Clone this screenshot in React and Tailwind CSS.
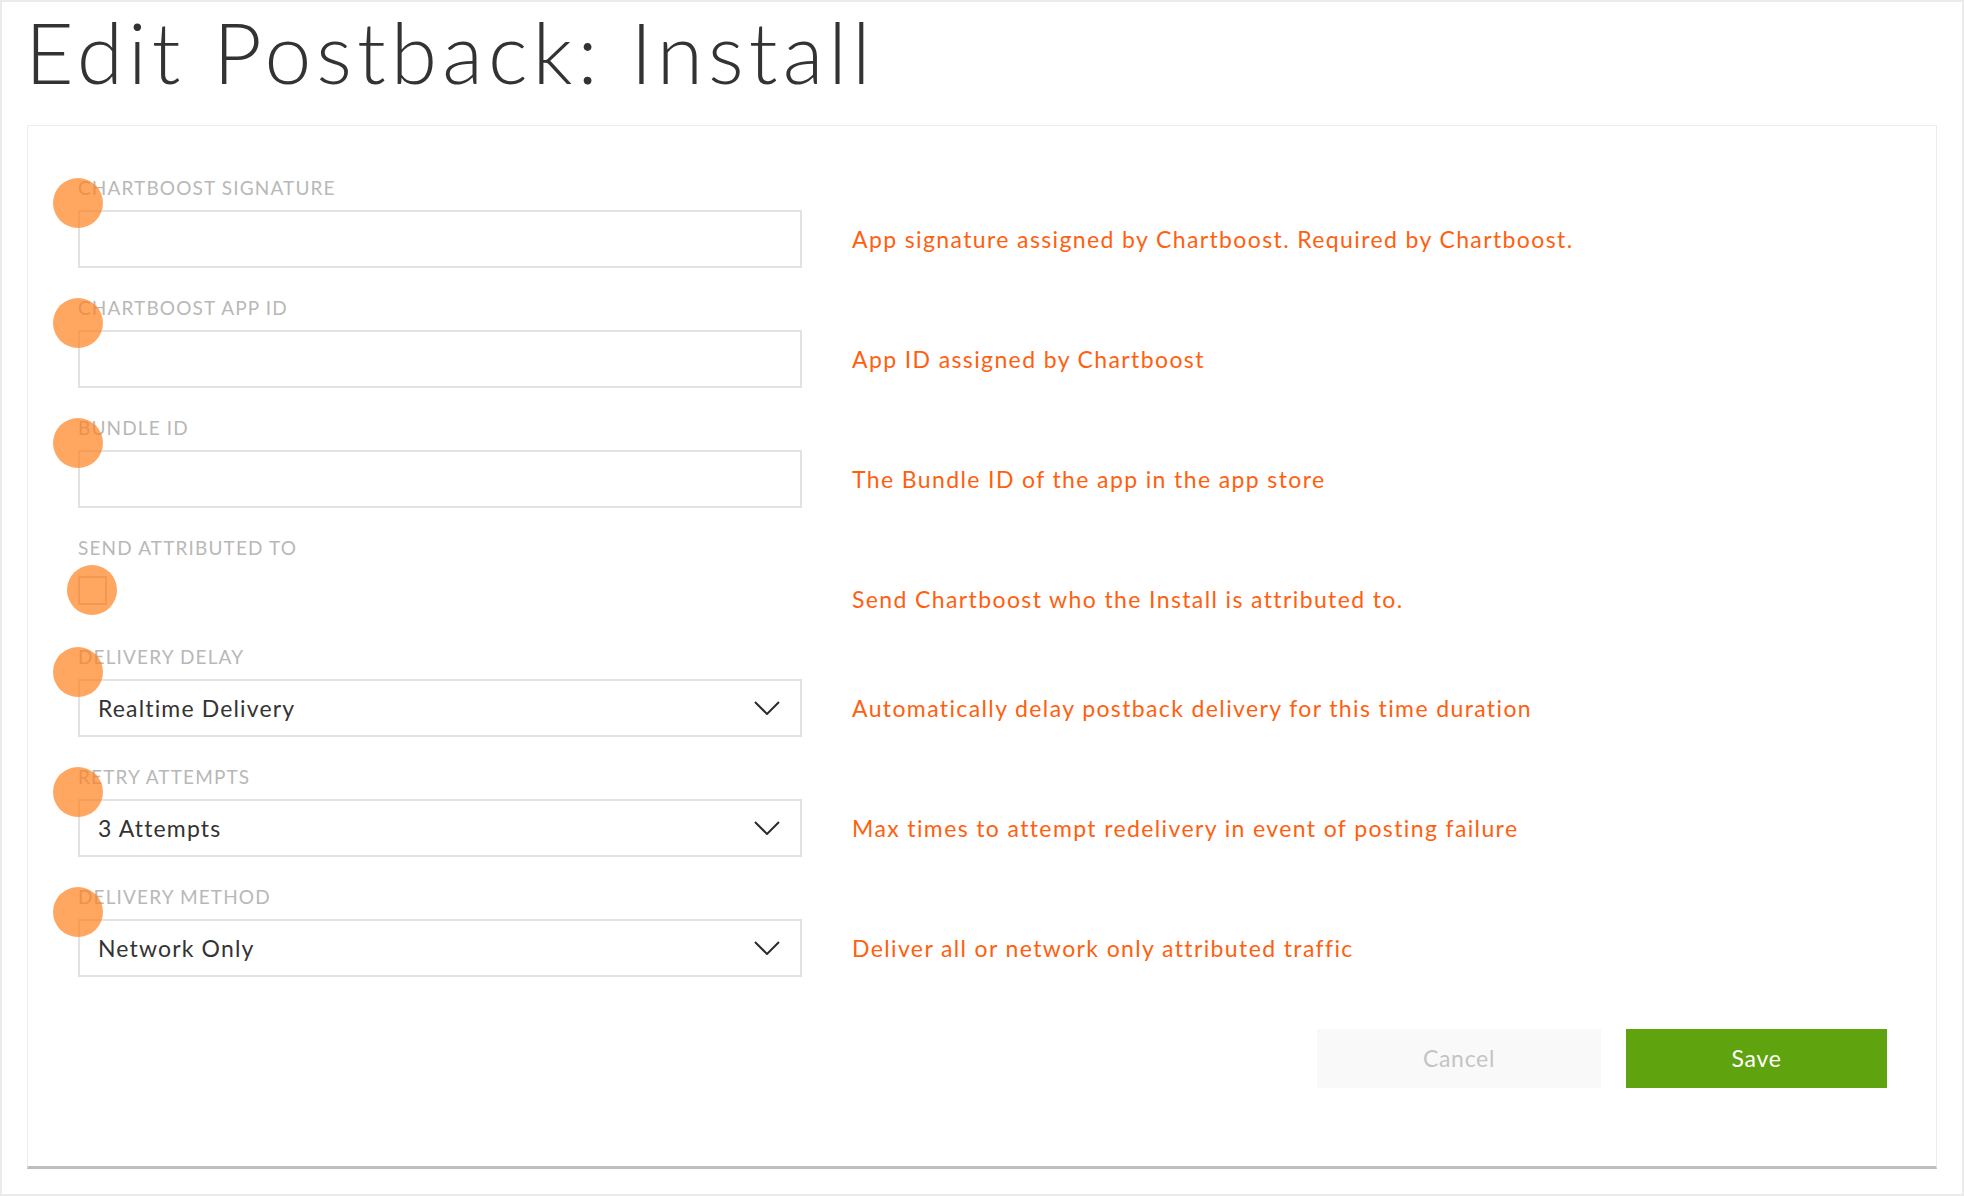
import React from 'react';

const fields = [
  { label: 'CHARTBOOST SIGNATURE', help: 'App signature assigned by Chartboost. Required by Chartboost.', type: 'input' },
  { label: 'CHARTBOOST APP ID', help: 'App ID assigned by Chartboost', type: 'input' },
  { label: 'BUNDLE ID', help: 'The Bundle ID of the app in the app store', type: 'input' },
  { label: 'SEND ATTRIBUTED TO', help: 'Send Chartboost who the Install is attributed to.', type: 'checkbox' },
  { label: 'DELIVERY DELAY', help: 'Automatically delay postback delivery for this time duration', type: 'select', value: 'Realtime Delivery' },
  { label: 'RETRY ATTEMPTS', help: 'Max times to attempt redelivery in event of posting failure', type: 'select', value: '3 Attempts' },
  { label: 'DELIVERY METHOD', help: 'Deliver all or network only attributed traffic', type: 'select', value: 'Network Only' },
];

// click marker drawn over the field
function Marker({ className }) {
  return <span className={`absolute w-[50px] h-[50px] rounded-full bg-[#ff801e]/70 pointer-events-none ${className}`} />;
}

function Chevron() {
  return (
    <svg width="26" height="14" viewBox="0 0 26 14" fill="none">
      <polyline points="1,1 13,13 25,1" stroke="#2b2b2b" strokeWidth="2" />
    </svg>
  );
}

function Field({ field, index }) {
  const isCheckbox = field.type === 'checkbox';
  return (
    <div className={`flex ${index === 0 ? '' : index === 4 ? 'mt-[19px]' : 'mt-[30px]'}`}>
      <div className="relative w-[724px] shrink-0">
        <div className="h-[20px] leading-[20px] text-[19px] text-[#b8b8b8] tracking-[0.06em]">{field.label}</div>
        <div className="mt-[12px]">
          {field.type === 'input' && (
            <div className="h-[58px] border-2 border-[#e2e2e2] bg-white" />
          )}
          {field.type === 'select' && (
            <div className="h-[58px] border-2 border-[#e2e2e2] bg-white flex items-center justify-between pl-[18px] pr-[20px]">
              <span className="text-[23px] text-[#333] tracking-[0.05em]">{field.value}</span>
              <Chevron />
            </div>
          )}
          {isCheckbox && (
            <div className="h-[47px] pt-[6px]">
              <div className="w-[29px] h-[29px] border-2 border-[#cfcfcf] bg-white" />
            </div>
          )}
        </div>
        {isCheckbox ? <Marker className="left-[-11px] top-[27px]" /> : <Marker className="left-[-25px] top-[0px]" />}
      </div>
      <div className="pl-[50px] mt-[32px] h-[58px] flex items-center text-[23px] text-[#ff5f0f] tracking-[0.06em]">
        {field.help}
      </div>
    </div>
  );
}

export default function App() {
  return (
    <div className="w-full h-[1196px] border-2 border-[#ebebeb] bg-white font-['Lato',sans-serif] box-border">
      <h1 className="ml-[23px] mt-[8px] text-[84px] leading-[84px] font-light tracking-[0.06em] text-[#333]">Edit Postback: Install</h1>
      <div className="mx-[25px] mt-[31px] h-[1044px] border border-[#ececec] border-b-[3px] border-b-[#bebebe] pl-[50px] pr-[49px] pt-[52px]">
        {fields.map((f, i) => (
          <Field key={f.label} field={f} index={i} />
        ))}
        <div className="flex justify-end gap-[25px] mt-[52px]">
          <button className="w-[284px] h-[59px] bg-[#f9f9f9] text-[23px] text-[#c4c4c4] tracking-[0.03em]">Cancel</button>
          <button className="w-[261px] h-[59px] bg-[#5fa30e] text-[23px] text-white tracking-[0.03em]">Save</button>
        </div>
      </div>
    </div>
  );
}
